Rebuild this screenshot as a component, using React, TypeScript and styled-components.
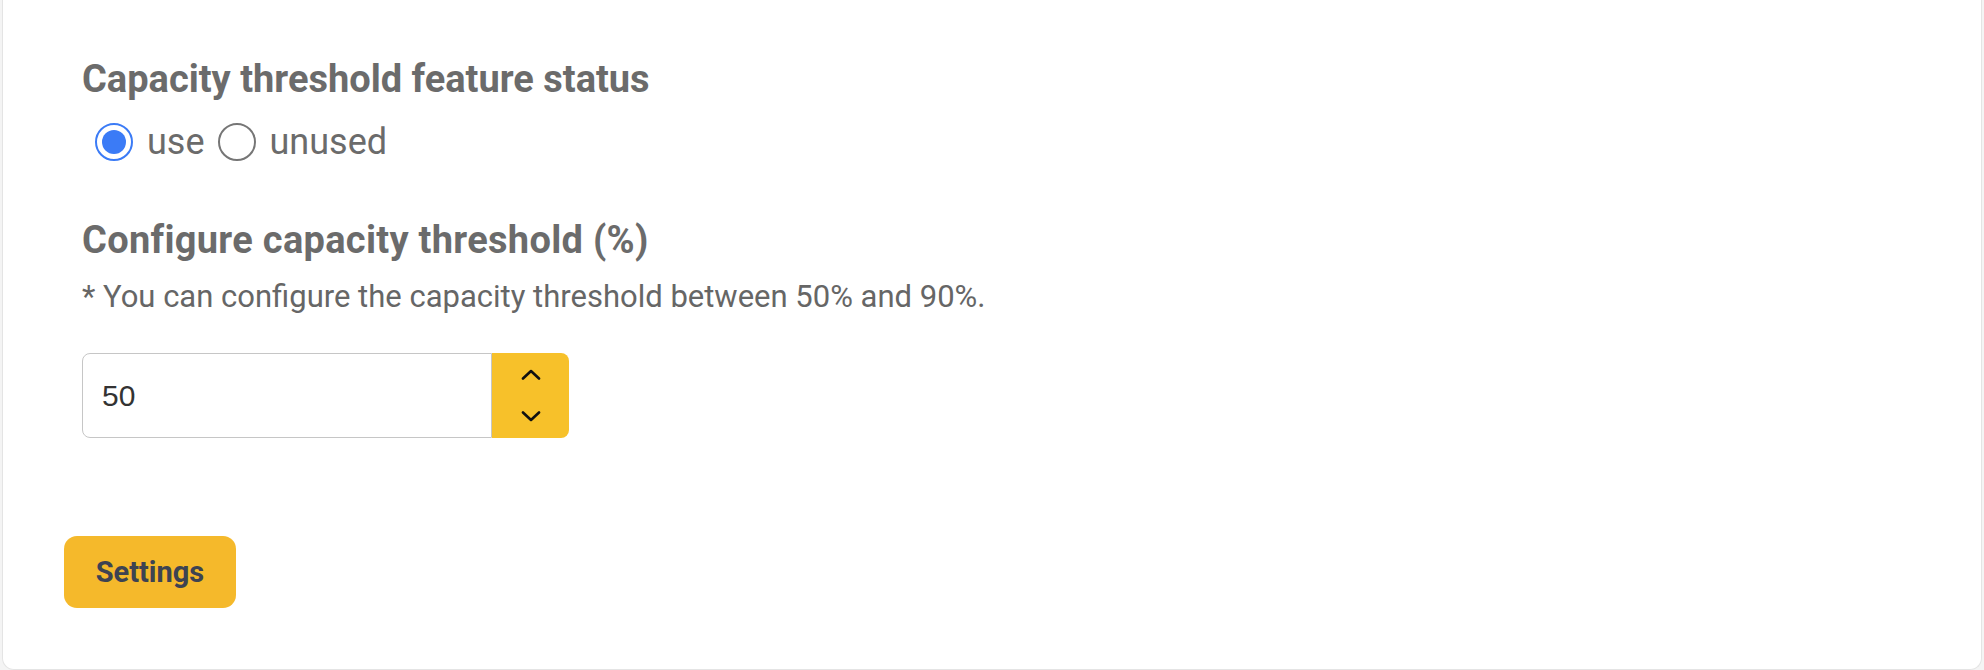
import React, { useState } from 'react';
import styled, { createGlobalStyle } from 'styled-components';

const GlobalStyle = createGlobalStyle`
  html, body {
    margin: 0;
    padding: 0;
    background: #f4f4f4;
  }

  body {
    font-family: Roboto, 'Liberation Sans', sans-serif;
  }
`;

const Card = styled.div`
  margin: 0 2px 1px 2px;
  background: #ffffff;
  border: 1px solid #e4e4e4;
  border-top: none;
  border-radius: 0 0 12px 12px;
  padding: 56px 61px 61px;
`;

const Form = styled.div`
  display: flex;
  flex-direction: column;
  padding-left: 18px;
`;

const Heading = styled.h3<{ $top?: number; $spacing?: number }>`
  margin: ${(p) => p.$top ?? 0}px 0 0;
  font-size: 38px;
  line-height: 46px;
  font-weight: 700;
  letter-spacing: ${(p) => p.$spacing ?? 0}px;
  color: #6b6b6b;
`;

const RadioRow = styled.div`
  display: flex;
  align-items: center;
  height: 40px;
  margin-top: 20px;
  padding-left: 13px;
`;

const RadioLabel = styled.label`
  display: flex;
  align-items: center;
  gap: 14px;
  margin-right: 13px;
  font-size: 36px;
  color: #6b6b6b;
  cursor: pointer;
`;

const RadioMark = styled.span<{ $checked: boolean }>`
  box-sizing: border-box;
  width: 38px;
  height: 38px;
  border-radius: 50%;
  border: 2px solid ${(p) => (p.$checked ? '#3b7bf6' : '#767676')};
  display: flex;
  align-items: center;
  justify-content: center;

  &::after {
    content: '';
    display: ${(p) => (p.$checked ? 'block' : 'none')};
    width: 24px;
    height: 24px;
    border-radius: 50%;
    background: #3b7bf6;
  }
`;

const Hint = styled.p`
  margin: 16px 0 0;
  font-size: 31px;
  line-height: 36px;
  color: #666666;
`;

const NumberField = styled.div`
  display: flex;
  width: 487px;
  height: 85px;
  margin-top: 38px;
`;

const NumberInput = styled.input`
  box-sizing: border-box;
  flex: 1;
  min-width: 0;
  height: 100%;
  border: 1px solid #c6c6c6;
  border-radius: 8px 0 0 8px;
  padding: 0 0 0 19px;
  font-family: 'Liberation Sans', Arial, sans-serif;
  font-size: 30px;
  color: #333333;
  outline: none;
  background: #ffffff;
`;

const Spinner = styled.div`
  width: 77px;
  display: flex;
  flex-direction: column;
  background: #f7c12a;
  border-radius: 0 8px 8px 0;
`;

const SpinButton = styled.button`
  flex: 1;
  border: none;
  background: transparent;
  padding: 0;
  display: flex;
  align-items: center;
  justify-content: center;
  cursor: pointer;
`;

const SettingsButton = styled.button`
  margin-top: 98px;
  width: 172px;
  height: 72px;
  border: none;
  border-radius: 13px;
  background: #f5b92b;
  color: #3d4352;
  font-family: Roboto, 'Liberation Sans', sans-serif;
  font-size: 29px;
  font-weight: 700;
  cursor: pointer;
`;

const Chevron = ({ up }: { up?: boolean }) => (
  <svg width="20" height="11" viewBox="0 0 20 11" fill="none">
    <polyline
      points={up ? '2,9.5 10,2 18,9.5' : '2,1.5 10,9 18,1.5'}
      stroke="#111111"
      strokeWidth="2.6"
      strokeLinecap="round"
      strokeLinejoin="round"
    />
  </svg>
);

const App = () => {
  const [status, setStatus] = useState<'use' | 'unused'>('use');
  const [threshold, setThreshold] = useState(50);

  const step = (delta: number) => {
    setThreshold((v) => Math.min(90, Math.max(50, v + delta)));
  };

  return (
    <>
      <GlobalStyle />
      <Card>
        <Form>
          <Heading>Capacity threshold feature status</Heading>
          <RadioRow>
            <RadioLabel onClick={() => setStatus('use')}>
              <RadioMark $checked={status === 'use'} />
              use
            </RadioLabel>
            <RadioLabel onClick={() => setStatus('unused')}>
              <RadioMark $checked={status === 'unused'} />
              unused
            </RadioLabel>
          </RadioRow>
          <Heading $top={55} $spacing={0.3}>
            Configure capacity threshold (%)
          </Heading>
          <Hint>* You can configure the capacity threshold between 50% and 90%.</Hint>
          <NumberField>
            <NumberInput
              type="text"
              value={threshold}
              onChange={(e) => setThreshold(Number(e.target.value) || 0)}
            />
            <Spinner>
              <SpinButton type="button" onClick={() => step(1)}>
                <Chevron up />
              </SpinButton>
              <SpinButton type="button" onClick={() => step(-1)}>
                <Chevron />
              </SpinButton>
            </Spinner>
          </NumberField>
        </Form>
        <SettingsButton type="button">Settings</SettingsButton>
      </Card>
    </>
  );
};

export default App;
